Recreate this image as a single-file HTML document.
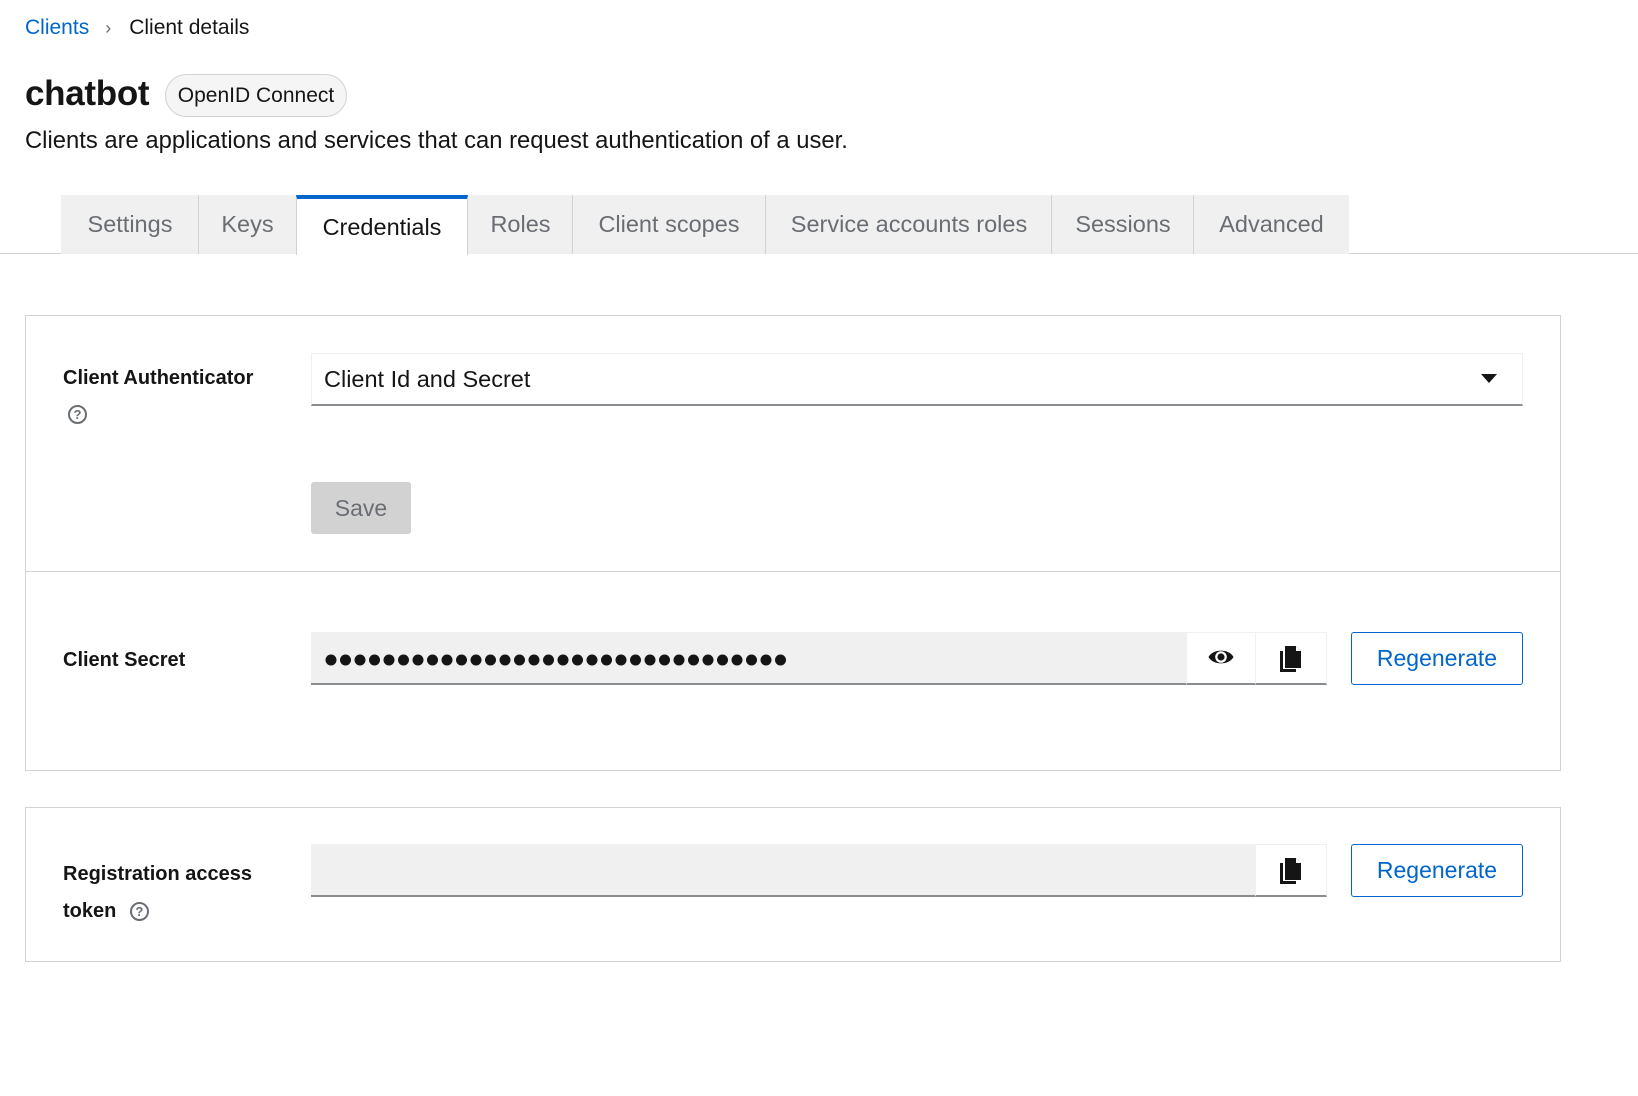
<!DOCTYPE html>
<html><head><meta charset="utf-8"><style>
*{box-sizing:border-box;margin:0;padding:0}
body{width:1638px;height:1096px;background:#fff;font-family:"Liberation Sans",sans-serif;color:#151515;position:relative;overflow:hidden}
.a{position:absolute}
.tab{position:absolute;top:195px;height:59px;background:#f0f0f0;border-left:1px solid #d2d2d2;color:#6a6e73;font-size:23.5px;display:flex;align-items:center;justify-content:center}
.lbl{font-weight:bold;font-size:20px}
.box{position:absolute;left:25px;width:1536px;border:1px solid #d2d2d2}
.regen{position:absolute;left:1351px;width:172px;height:53px;border:1px solid #06c;border-radius:3px;color:#06c;font-size:23px;display:flex;align-items:center;justify-content:center}
.help{display:inline-block;width:19px;height:19px;border:2px solid #6a6e73;border-radius:50%;color:#6a6e73;font-size:13px;font-weight:bold;text-align:center;line-height:15px}
</style></head><body>
<div class="a" style="left:25px;top:16px;font-size:21px"><span style="color:#06c">Clients</span><span style="color:#6a6e73;margin:0 18px 0 16px;font-size:18px">&#x203A;</span>Client details</div>
<div class="a" style="left:25px;top:74px;font-size:35px;font-weight:bold;letter-spacing:-0.3px">chatbot</div>
<div class="a" style="left:165px;top:74px;width:182px;height:43px;border:1px solid #d2d2d2;border-radius:22px;background:#f5f5f5;font-size:21px;display:flex;align-items:center;justify-content:center">OpenID Connect</div>
<div class="a" style="left:25px;top:127px;font-size:23.8px">Clients are applications and services that can request authentication of a user.</div>
<div class="a" style="left:0;top:253px;width:1638px;height:1px;background:#d2d2d2"></div>
<div class="tab" style="left:61px;width:138px;border-left:none">Settings</div>
<div class="tab" style="left:198px;width:98px">Keys</div>
<div class="tab" style="left:467px;width:106px">Roles</div>
<div class="tab" style="left:572px;width:193px">Client scopes</div>
<div class="tab" style="left:765px;width:287px">Service accounts roles</div>
<div class="tab" style="left:1051px;width:143px">Sessions</div>
<div class="tab" style="left:1193px;width:156px">Advanced</div>
<div class="tab" style="left:296px;width:172px;background:#fff;color:#151515;border-top:4px solid #06c;border-right:1px solid #d2d2d2;height:60px">Credentials</div>

<div class="box" style="top:315px;height:456px"></div>
<div class="a" style="left:25px;top:571px;width:1536px;height:1px;background:#d2d2d2"></div>
<div class="a lbl" style="left:63px;top:367px">Client Authenticator</div>
<div class="a" style="left:68px;top:405px"><span class="help">?</span></div>
<div class="a" style="left:311px;top:353px;width:1212px;height:53px;border:1px solid #f0f0f0;border-bottom:2px solid #8a8d90;font-size:23.5px;padding-left:12px;display:flex;align-items:center">Client Id and Secret</div>
<svg class="a" style="left:1481px;top:374px" width="16" height="10"><path d="M0 0H16L8 9Z" fill="#151515"/></svg>
<div class="a" style="left:311px;top:482px;width:100px;height:52px;background:#d2d2d2;border-radius:3px;color:#6a6e73;font-size:23px;display:flex;align-items:center;justify-content:center">Save</div>

<div class="a lbl" style="left:63px;top:649px">Client Secret</div>
<div class="a" style="left:311px;top:632px;width:876px;height:53px;background:#f0f0f0;border-bottom:2px solid #8a8d90"></div>
<svg class="a" style="left:325px;top:654px" width="470" height="12">
<g fill="#151515">
<circle cx="6" cy="6" r="5.5"/><circle cx="20.5" cy="6" r="5.5"/><circle cx="35" cy="6" r="5.5"/><circle cx="49.5" cy="6" r="5.5"/><circle cx="64" cy="6" r="5.5"/><circle cx="78.5" cy="6" r="5.5"/><circle cx="93" cy="6" r="5.5"/><circle cx="107.5" cy="6" r="5.5"/><circle cx="122" cy="6" r="5.5"/><circle cx="136.5" cy="6" r="5.5"/><circle cx="151" cy="6" r="5.5"/><circle cx="165.5" cy="6" r="5.5"/><circle cx="180" cy="6" r="5.5"/><circle cx="194.5" cy="6" r="5.5"/><circle cx="209" cy="6" r="5.5"/><circle cx="223.5" cy="6" r="5.5"/><circle cx="238" cy="6" r="5.5"/><circle cx="252.5" cy="6" r="5.5"/><circle cx="267" cy="6" r="5.5"/><circle cx="281.5" cy="6" r="5.5"/><circle cx="296" cy="6" r="5.5"/><circle cx="310.5" cy="6" r="5.5"/><circle cx="325" cy="6" r="5.5"/><circle cx="339.5" cy="6" r="5.5"/><circle cx="354" cy="6" r="5.5"/><circle cx="368.5" cy="6" r="5.5"/><circle cx="383" cy="6" r="5.5"/><circle cx="397.5" cy="6" r="5.5"/><circle cx="412" cy="6" r="5.5"/><circle cx="426.5" cy="6" r="5.5"/><circle cx="441" cy="6" r="5.5"/><circle cx="455.5" cy="6" r="5.5"/>
</g></svg>
<div class="a" style="left:1186px;top:632px;width:70px;height:53px;border:1px solid #f0f0f0;border-bottom:2px solid #8a8d90"></div>
<div class="a" style="left:1255px;top:632px;width:72px;height:53px;border:1px solid #f0f0f0;border-bottom:2px solid #8a8d90"></div>
<svg class="a" style="left:1208px;top:647px" width="26" height="20" viewBox="0 0 26 20"><path d="M0.5 10C5 1.5 21 1.5 25.5 10C21 18.5 5 18.5 0.5 10Z" fill="#151515"/><circle cx="13" cy="10" r="5.8" fill="#fff"/><circle cx="13" cy="10" r="3.6" fill="#151515"/></svg>
<svg class="a" style="left:1280px;top:646px" width="22" height="26" viewBox="0 0 22 26"><path d="M0 5H3V23H16V26H0Z" fill="#151515"/><path d="M5 0H16L21 5V22H5Z" fill="#151515"/><path d="M16 0V5H21" fill="#fff"/></svg>
<div class="regen" style="top:632px">Regenerate</div>

<div class="box" style="top:807px;height:155px"></div>
<div class="a lbl" style="left:63px;top:856px;line-height:37px">Registration access<br>token <span class="help" style="margin-left:8px;vertical-align:middle">?</span></div>
<div class="a" style="left:311px;top:844px;width:945px;height:53px;background:#f0f0f0;border-bottom:2px solid #8a8d90"></div>
<div class="a" style="left:1255px;top:844px;width:72px;height:53px;border:1px solid #f0f0f0;border-bottom:2px solid #8a8d90"></div>
<svg class="a" style="left:1280px;top:858px" width="22" height="26" viewBox="0 0 22 26"><path d="M0 5H3V23H16V26H0Z" fill="#151515"/><path d="M5 0H16L21 5V22H5Z" fill="#151515"/><path d="M16 0V5H21" fill="#fff"/></svg>
<div class="regen" style="top:844px">Regenerate</div>
</body></html>
